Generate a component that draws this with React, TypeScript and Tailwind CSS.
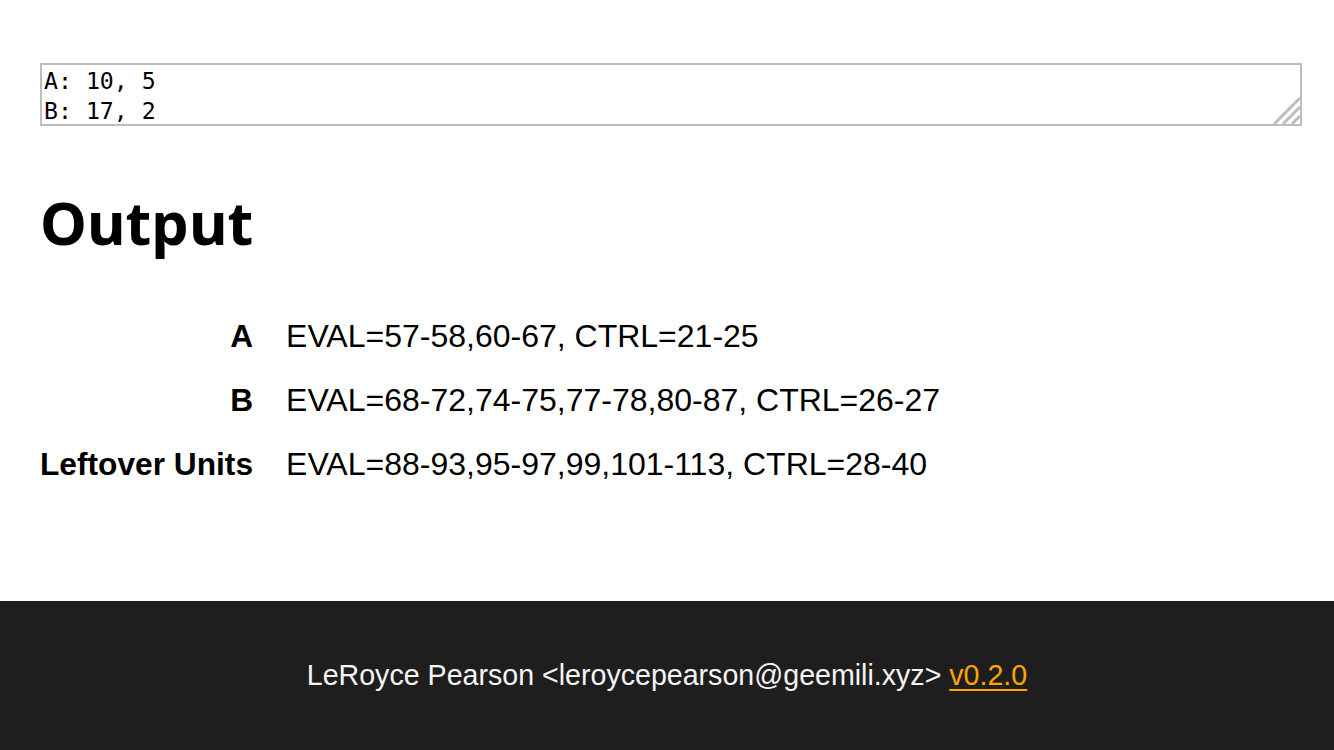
export default function App() {
  return (
    <div className="flex min-h-[750px] flex-col bg-white font-['Liberation_Sans',Arial,sans-serif] text-black">
      <main className="flex-1 px-10 pt-[63px]">
        <div className="relative">
          <textarea
            className="box-content block h-[55px] w-full resize-none border-2 border-[#bdbdbd] px-[2px] pb-[3px] pt-[1px] font-['DejaVu_Sans_Mono',monospace] text-[23.2px] leading-[30px] text-black outline-none"
            defaultValue={'A: 10, 5\nB: 17, 2'}
            spellCheck={false}
          />
          {/* resize grip */}
          <svg
            className="pointer-events-none absolute bottom-[2px] right-[-6px] h-[28px] w-[28px]"
            viewBox="0 0 28 28"
            stroke="#bdbdbd"
            strokeWidth="3"
          >
            <line x1="2" y1="28" x2="28" y2="2" />
            <line x1="11" y1="28" x2="28" y2="11" />
            <line x1="20" y1="28" x2="28" y2="20" />
          </svg>
        </div>

        <h1 className="mt-[56px] font-['Noto_Sans',sans-serif] text-[59.4px] font-bold leading-[80px]">Output</h1>

        <div className="mt-[42px] grid grid-cols-[auto_1fr] gap-x-[33px] text-[32px] leading-[64px]">
          <div className="text-right text-[31.7px] font-bold">A</div>
          <div>EVAL=57-58,60-67, CTRL=21-25</div>
          <div className="text-right text-[31.7px] font-bold">B</div>
          <div>EVAL=68-72,74-75,77-78,80-87, CTRL=26-27</div>
          <div className="text-right text-[31.7px] font-bold">Leftover Units</div>
          <div>EVAL=88-93,95-97,99,101-113, CTRL=28-40</div>
        </div>
      </main>

      <footer className="flex h-[149px] items-center justify-center bg-[#1e1e1e] text-[28.6px] text-[#f5f5f5]">
        <p>
          LeRoyce Pearson &lt;leroycepearson@geemili.xyz&gt;{' '}
          <a href="#" className="text-[#ffa500] underline underline-offset-4">
            v0.2.0
          </a>
        </p>
      </footer>
    </div>
  )
}
